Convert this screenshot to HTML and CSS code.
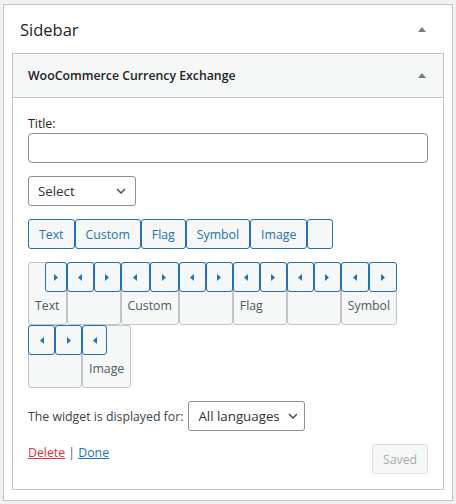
FILE: index.html
```html
<!DOCTYPE html>
<html>
<head>
<meta charset="utf-8">
<link rel="stylesheet" href="styles.css">
</head>
<body>
<div class="sidebar">
  <div class="sidebar-head">
    <h2 class="sidebar-title">Sidebar</h2>
    <svg class="toggle" width="8" height="5" viewBox="0 0 8 5"><path d="M0 5 L4 0 L8 5 Z" fill="#787c82"/></svg>
  </div>
  <div class="widget">
    <div class="widget-top">
      <h3 class="widget-title">WooCommerce Currency Exchange</h3>
      <svg class="toggle" width="8" height="5" viewBox="0 0 8 5"><path d="M0 5 L4 0 L8 5 Z" fill="#787c82"/></svg>
    </div>
    <div class="widget-inside">
      <label class="field-label">Title:</label>
      <input class="text-input" type="text">
      <div class="select select-type">
        <span>Select</span>
        <svg class="chev" width="10" height="6" viewBox="0 0 10 6"><path d="M1 1 L5 5 L9 1" fill="none" stroke="#50575e" stroke-width="1.6"/></svg>
      </div>
      <div class="tabs">
        <button class="tab">Text</button>
        <button class="tab">Custom</button>
        <button class="tab">Flag</button>
        <button class="tab">Symbol</button>
        <button class="tab">Image</button>
        <button class="tab tab-empty"></button>
      </div>
      <div class="order">
        <div class="cell cell-narrow">
          <div class="moves moves-end">
            <button class="mv mv-solo-r"><svg width="4" height="7" viewBox="0 0 4 7"><path d="M0 0 L4 3.5 L0 7 Z" fill="#2271b1"/></svg></button>
          </div>
          <div class="cell-label">Text</div>
        </div>
        <div class="cell">
          <div class="moves">
            <button class="mv"><svg width="4" height="7" viewBox="0 0 4 7"><path d="M4 0 L0 3.5 L4 7 Z" fill="#2271b1"/></svg></button>
            <button class="mv"><svg width="4" height="7" viewBox="0 0 4 7"><path d="M0 0 L4 3.5 L0 7 Z" fill="#2271b1"/></svg></button>
          </div>
          <div class="cell-label"></div>
        </div>
        <div class="cell">
          <div class="moves">
            <button class="mv"><svg width="4" height="7" viewBox="0 0 4 7"><path d="M4 0 L0 3.5 L4 7 Z" fill="#2271b1"/></svg></button>
            <button class="mv"><svg width="4" height="7" viewBox="0 0 4 7"><path d="M0 0 L4 3.5 L0 7 Z" fill="#2271b1"/></svg></button>
          </div>
          <div class="cell-label">Custom</div>
        </div>
        <div class="cell">
          <div class="moves">
            <button class="mv"><svg width="4" height="7" viewBox="0 0 4 7"><path d="M4 0 L0 3.5 L4 7 Z" fill="#2271b1"/></svg></button>
            <button class="mv"><svg width="4" height="7" viewBox="0 0 4 7"><path d="M0 0 L4 3.5 L0 7 Z" fill="#2271b1"/></svg></button>
          </div>
          <div class="cell-label"></div>
        </div>
        <div class="cell">
          <div class="moves">
            <button class="mv"><svg width="4" height="7" viewBox="0 0 4 7"><path d="M4 0 L0 3.5 L4 7 Z" fill="#2271b1"/></svg></button>
            <button class="mv"><svg width="4" height="7" viewBox="0 0 4 7"><path d="M0 0 L4 3.5 L0 7 Z" fill="#2271b1"/></svg></button>
          </div>
          <div class="cell-label">Flag</div>
        </div>
        <div class="cell">
          <div class="moves">
            <button class="mv"><svg width="4" height="7" viewBox="0 0 4 7"><path d="M4 0 L0 3.5 L4 7 Z" fill="#2271b1"/></svg></button>
            <button class="mv"><svg width="4" height="7" viewBox="0 0 4 7"><path d="M0 0 L4 3.5 L0 7 Z" fill="#2271b1"/></svg></button>
          </div>
          <div class="cell-label"></div>
        </div>
        <div class="cell">
          <div class="moves">
            <button class="mv"><svg width="4" height="7" viewBox="0 0 4 7"><path d="M4 0 L0 3.5 L4 7 Z" fill="#2271b1"/></svg></button>
            <button class="mv"><svg width="4" height="7" viewBox="0 0 4 7"><path d="M0 0 L4 3.5 L0 7 Z" fill="#2271b1"/></svg></button>
          </div>
          <div class="cell-label">Symbol</div>
        </div>
        <div class="cell">
          <div class="moves">
            <button class="mv"><svg width="4" height="7" viewBox="0 0 4 7"><path d="M4 0 L0 3.5 L4 7 Z" fill="#2271b1"/></svg></button>
            <button class="mv"><svg width="4" height="7" viewBox="0 0 4 7"><path d="M0 0 L4 3.5 L0 7 Z" fill="#2271b1"/></svg></button>
          </div>
          <div class="cell-label"></div>
        </div>
        <div class="cell cell-narrow">
          <div class="moves">
            <button class="mv mv-solo-l"><svg width="4" height="7" viewBox="0 0 4 7"><path d="M4 0 L0 3.5 L4 7 Z" fill="#2271b1"/></svg></button>
          </div>
          <div class="cell-label">Image</div>
        </div>
      </div>
      <div class="lang-row">
        <span class="lang-label">The widget is displayed for:</span>
        <div class="select select-lang">
          <span>All languages</span>
          <svg class="chev" width="10" height="6" viewBox="0 0 10 6"><path d="M1 1 L5 5 L9 1" fill="none" stroke="#50575e" stroke-width="1.6"/></svg>
        </div>
      </div>
      <div class="actions">
        <div class="links"><a class="link-delete" href="#">Delete</a> | <a class="link-done" href="#">Done</a></div>
        <button class="saved" disabled>Saved</button>
      </div>
    </div>
  </div>
</div>
</body>
</html>
```
FILE: styles.css
```css
html, body {
  margin: 0;
  padding: 0;
  background: #f0f0f1;
}
body {
  padding: 4px 3px;
  font-family: "Open Sans", "Noto Sans", sans-serif;
  font-size: 12.3px;
  color: #1d2327;
}
.sidebar {
  background: #fff;
  border: 1px solid #c3c4c7;
  padding: 0 8px 10px;
}
.sidebar-head {
  height: 48px;
  display: flex;
  align-items: center;
  justify-content: space-between;
  padding: 0 18px 0 8px;
}
.sidebar-title {
  margin: 0;
  font-size: 16.5px;
  font-weight: 400;
  color: #1d2327;
}
.toggle {
  display: block;
}
.widget {
  border: 1px solid #c3c4c7;
  background: #fff;
}
.widget-top {
  height: 43px;
  background: #f6f7f7;
  border-bottom: 1px solid #c3c4c7;
  display: flex;
  align-items: center;
  justify-content: space-between;
  padding: 0 17px 0 15px;
}
.widget-title {
  margin: 0;
  font-size: 12.3px;
  font-weight: 600;
  color: #1d2327;
}
.widget-inside {
  padding: 17px 15px 15px;
}
.field-label {
  display: block;
  line-height: 18px;
  color: #1d2327;
}
.text-input {
  display: block;
  box-sizing: border-box;
  width: 100%;
  height: 30px;
  margin: 0;
  border: 1px solid #8c8f94;
  border-radius: 4px;
  background: #fff;
}
.select {
  box-sizing: border-box;
  height: 30px;
  border: 1px solid #8c8f94;
  border-radius: 3px;
  background: #fff;
  display: flex;
  align-items: center;
  justify-content: space-between;
  font-size: 13.3px;
  color: #2c3338;
  padding: 0 9px 0 9px;
}
.select-type {
  width: 108px;
  margin-top: 13px;
}
.tabs {
  display: flex;
  margin-top: 13px;
}
.tab {
  box-sizing: border-box;
  height: 30px;
  margin: 0;
  padding: 0 10px;
  border: 1px solid #2271b1;
  border-radius: 3px;
  background: #f6f7f7;
  color: #2271b1;
  font-family: inherit;
  font-size: 12.3px;
}
.tab-empty {
  width: 26px;
}
.order {
  display: flex;
  flex-wrap: wrap;
  margin-top: 13px;
}
.cell {
  box-sizing: border-box;
  min-width: 54px;
  display: flex;
  flex-direction: column;
  border: 1px solid #c3c4c7;
  border-radius: 3px;
  background: #f6f7f7;
}
.cell-narrow {
  min-width: 0;
}
.moves {
  display: flex;
  margin: -1px -1px 0;
}
.moves-end {
  justify-content: flex-end;
}
.mv {
  flex: 1 1 0;
  box-sizing: border-box;
  height: 30px;
  margin: 0;
  padding: 0;
  border: 1px solid #2271b1;
  border-radius: 3px;
  background: #f6f7f7;
  display: flex;
  align-items: center;
  justify-content: center;
}
.mv-solo-r {
  flex: 0 0 22px;
}
.mv-solo-l {
  flex: 0 0 25px;
}
.cell-label {
  padding: 0 6px 4px;
  line-height: 28px;
  height: 28px;
  color: #50575e;
  white-space: nowrap;
}
.lang-row {
  display: flex;
  align-items: center;
  gap: 5px;
  margin-top: 13px;
}
.lang-label {
  color: #3c434a;
}
.select-lang {
  width: 117px;
  padding: 0 6px 0 9px;
}
.actions {
  display: flex;
  justify-content: space-between;
  align-items: flex-start;
  margin-top: 13px;
}
.links {
  line-height: 18px;
  color: #50575e;
}
.link-delete {
  color: #d63638;
}
.link-done {
  color: #2271b1;
}
.saved {
  box-sizing: border-box;
  height: 30px;
  width: 56px;
  margin: 0;
  padding: 0;
  border: 1px solid #dcdcde;
  border-radius: 3px;
  background: #f6f7f7;
  color: #a7aaad;
  font-family: inherit;
  font-size: 12.3px;
}
```
